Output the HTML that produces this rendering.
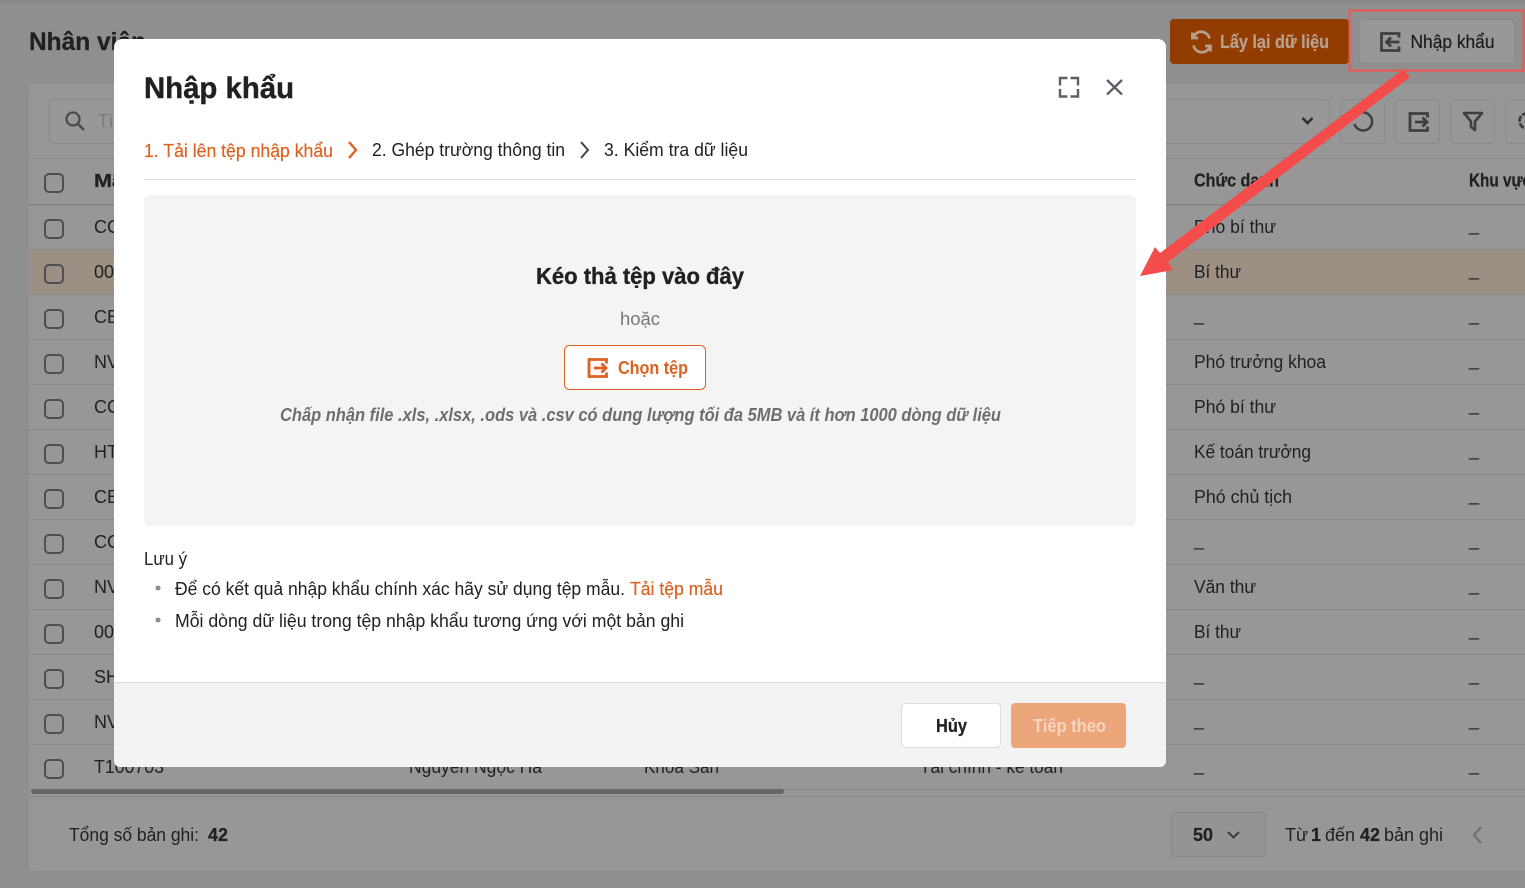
<!DOCTYPE html>
<html lang="vi">
<head>
<meta charset="utf-8">
<title>Nhập khẩu</title>
<style>
html,body{margin:0;padding:0;width:1525px;height:888px;overflow:hidden;background:#8e8e8e}
svg{display:block}
text{font-family:"Liberation Sans","DejaVu Sans",sans-serif;font-size:18px;fill:#212121;white-space:pre}
.b{font-weight:700;stroke:#212121;stroke-width:.25px}
.dk{fill:#1c1c1c}
.o{fill:#dd6120;stroke:#dd6120;stroke-width:.2px}
</style>
</head>
<body>
<svg xmlns="http://www.w3.org/2000/svg" width="1525" height="888" viewBox="0 0 1525 888">
<defs>
<linearGradient id="top" x1="0" y1="0" x2="0" y2="1"><stop offset="0" stop-color="#858585"/><stop offset="1" stop-color="#8f8f8f"/></linearGradient>
<g id="imp" fill="none" stroke-width="2.800"><path d="M19 5.500V1.500H1.500v17H19V14.500"/><path d="M19.500 10H6.500M11 5.500 6.500 10l4.500 4.500"/></g>
<g id="exp" fill="none" stroke-width="2.800"><path d="M19 5.500V1.500H1.500v17H19V14.500"/><path d="M6.500 10h12.500M14 5.500 18.500 10 14 14.500"/></g>
</defs>

<!-- page -->
<rect width="1525" height="888" fill="#8f8f8f"/>
<rect width="1525" height="5" fill="url(#top)"/>
<text x="29" y="50" class="b" style="font-size:25px;stroke:#1a1a1a" textLength="117" lengthAdjust="spacingAndGlyphs">Nhân viên</text>

<!-- top buttons -->
<rect x="1170" y="19" width="179" height="45" rx="4" fill="#923c00"/>
<g fill="none" stroke="#b8a08f" stroke-width="2.800">
<path d="M1209.500 38.500a8.500 8.500 0 0 0-15-3.500l-1.500 2"/><path d="M1193.500 45.500a8.500 8.500 0 0 0 15 3.500l1.500-2"/>
<path d="M1192.500 32.500v5.500h5.500M1210.500 51.500v-5.500h-5.500"/>
</g>
<text x="1220" y="48" textLength="109" lengthAdjust="spacingAndGlyphs" style="fill:#b8a08f;stroke:#b8a08f" class="b">Lấy lại dữ liệu</text>
<rect x="1359.500" y="19.500" width="155" height="44" rx="4" fill="#989898" stroke="#8b8b8b"/>
<use href="#imp" x="1380" y="32" stroke="#3f3f3f"/>
<text x="1410.500" y="48" textLength="84" lengthAdjust="spacingAndGlyphs" class="dk" style="stroke:#1c1c1c;stroke-width:.2px">Nhập khẩu</text>

<!-- panel -->
<rect x="29" y="84" width="1510" height="787" rx="5" fill="#979797"/>
<rect x="49.500" y="99.500" width="1280" height="44" rx="4" fill="#989898" stroke="#8a8a8a"/>
<circle cx="73" cy="119" r="6.500" fill="none" stroke="#4c4c4c" stroke-width="2.300"/><path d="M78 124l6 6" stroke="#4c4c4c" stroke-width="2.600"/>
<text x="98" y="127" textLength="30" lengthAdjust="spacingAndGlyphs" style="fill:#7a7a7a">Tìm</text>
<path d="M1302.500 118l5 5 5-5" fill="none" stroke="#2e2e2e" stroke-width="2.600"/>
<g fill="#979797" stroke="#8a8a8a">
<rect x="1340.500" y="99.500" width="44" height="44" rx="4"/>
<rect x="1395.500" y="99.500" width="44" height="44" rx="4"/>
<rect x="1450.500" y="99.500" width="44" height="44" rx="4"/>
<rect x="1505.500" y="99.500" width="44" height="44" rx="4"/>
</g>
<path d="M1354.500 124A9 9 0 1 0 1363 112.500" fill="none" stroke="#3f3f3f" stroke-width="2.500"/>
<use href="#exp" x="1408.500" y="112" stroke="#3f3f3f"/>
<path d="M1464 113h18l-7 8.500V130l-4-3v-5.500z" fill="none" stroke="#3f3f3f" stroke-width="2.600" stroke-linejoin="round"/>
<circle cx="1527" cy="121" r="7.500" fill="none" stroke="#3f3f3f" stroke-width="2.800" stroke-dasharray="6 1.500"/>

<!-- table -->
<rect x="29" y="158" width="1496" height="46" fill="#979797"/>
<rect x="29" y="158" width="1496" height="1" fill="#8a8a8a"/>
<rect x="29" y="204" width="1496" height="1.500" fill="#838383"/>
<rect x="29" y="250" width="1496" height="44" fill="#9c9085"/>
<g fill="#888">
<rect x="29" y="249" width="1496" height="1"/><rect x="29" y="294" width="1496" height="1"/>
<rect x="29" y="339" width="1496" height="1"/><rect x="29" y="384" width="1496" height="1"/>
<rect x="29" y="429" width="1496" height="1"/><rect x="29" y="474" width="1496" height="1"/>
<rect x="29" y="519" width="1496" height="1"/><rect x="29" y="564" width="1496" height="1"/>
<rect x="29" y="609" width="1496" height="1"/><rect x="29" y="654" width="1496" height="1"/>
<rect x="29" y="699" width="1496" height="1"/><rect x="29" y="744" width="1496" height="1"/>
<rect x="29" y="789" width="1496" height="1"/><rect x="29" y="796" width="1496" height="1"/>
</g>
<g fill="none" stroke="#4e4e54" stroke-width="2">
<rect x="45" y="174" width="18" height="18" rx="4"/>
<rect x="45" y="220" width="18" height="18" rx="4"/><rect x="45" y="265" width="18" height="18" rx="4"/>
<rect x="45" y="310" width="18" height="18" rx="4"/><rect x="45" y="355" width="18" height="18" rx="4"/>
<rect x="45" y="400" width="18" height="18" rx="4"/><rect x="45" y="445" width="18" height="18" rx="4"/>
<rect x="45" y="490" width="18" height="18" rx="4"/><rect x="45" y="535" width="18" height="18" rx="4"/>
<rect x="45" y="580" width="18" height="18" rx="4"/><rect x="45" y="625" width="18" height="18" rx="4"/>
<rect x="45" y="670" width="18" height="18" rx="4"/><rect x="45" y="715" width="18" height="18" rx="4"/>
<rect x="45" y="760" width="18" height="18" rx="4"/>
</g>
<text x="94" y="187" class="b" textLength="30" lengthAdjust="spacingAndGlyphs">Mã</text>
<text x="1194" y="186.500" class="b" textLength="85" lengthAdjust="spacingAndGlyphs">Chức danh</text>
<text x="1469" y="186.500" class="b" textLength="62" lengthAdjust="spacingAndGlyphs">Khu vực</text>

<text x="94" y="233">CC</text><text x="94" y="278">00</text><text x="94" y="323">CB</text><text x="94" y="368">NV</text>
<text x="94" y="413">CC</text><text x="94" y="458">HT</text><text x="94" y="503">CB</text><text x="94" y="548">CC</text>
<text x="94" y="593">NV</text><text x="94" y="638">00</text><text x="94" y="683">SH</text><text x="94" y="728">NV</text>
<text x="94" y="773" textLength="70" lengthAdjust="spacingAndGlyphs">T100703</text>
<text x="409" y="773" textLength="133" lengthAdjust="spacingAndGlyphs">Nguyễn Ngọc Hà</text>
<text x="644" y="773" textLength="75" lengthAdjust="spacingAndGlyphs">Khoa Sản</text>
<text x="920" y="773" textLength="143" lengthAdjust="spacingAndGlyphs">Tài chính - kế toán</text>

<text x="1194" y="233" textLength="82" lengthAdjust="spacingAndGlyphs">Phó bí thư</text>
<text x="1194" y="278" textLength="47" lengthAdjust="spacingAndGlyphs">Bí thư</text>
<text x="1194" y="368" textLength="132" lengthAdjust="spacingAndGlyphs">Phó trưởng khoa</text>
<text x="1194" y="413" textLength="82" lengthAdjust="spacingAndGlyphs">Phó bí thư</text>
<text x="1194" y="458" textLength="117" lengthAdjust="spacingAndGlyphs">Kế toán trưởng</text>
<text x="1194" y="503" textLength="98" lengthAdjust="spacingAndGlyphs">Phó chủ tịch</text>
<text x="1194" y="593" textLength="62" lengthAdjust="spacingAndGlyphs">Văn thư</text>
<text x="1194" y="638" textLength="47" lengthAdjust="spacingAndGlyphs">Bí thư</text>
<text x="1194" y="321">_</text><text x="1194" y="546">_</text><text x="1194" y="681">_</text><text x="1194" y="726">_</text><text x="1194" y="771">_</text>
<text x="1469" y="231">_</text><text x="1469" y="276">_</text><text x="1469" y="321">_</text><text x="1469" y="366">_</text>
<text x="1469" y="411">_</text><text x="1469" y="456">_</text><text x="1469" y="501">_</text><text x="1469" y="546">_</text>
<text x="1469" y="591">_</text><text x="1469" y="636">_</text><text x="1469" y="681">_</text><text x="1469" y="726">_</text><text x="1469" y="771">_</text>

<rect x="31" y="789" width="753" height="5" rx="2.500" fill="#666"/>

<!-- footer -->
<text x="69" y="841" textLength="130" lengthAdjust="spacingAndGlyphs">Tổng số bản ghi:</text>
<text x="208" y="841" class="b" textLength="20" lengthAdjust="spacingAndGlyphs">42</text>
<rect x="1171.500" y="812.500" width="94" height="44" rx="4" fill="#949494" stroke="#868686"/>
<text x="1193" y="841" class="b" textLength="20" lengthAdjust="spacingAndGlyphs">50</text>
<path d="M1228 832l5.500 5.500 5.500-5.500" fill="none" stroke="#3a3a3a" stroke-width="2"/>
<text x="1285" y="841" textLength="23" lengthAdjust="spacingAndGlyphs">Từ</text>
<text x="1311" y="841" class="b">1</text>
<text x="1325" y="841" textLength="30" lengthAdjust="spacingAndGlyphs">đến</text>
<text x="1360" y="841" class="b" textLength="20" lengthAdjust="spacingAndGlyphs">42</text>
<text x="1384" y="841" textLength="59" lengthAdjust="spacingAndGlyphs">bản ghi</text>
<path d="M1481 827l-7 8 7 8" fill="none" stroke="#707070" stroke-width="2.200"/>

<!-- modal -->
<path d="M122 39H1158a8 8 0 0 1 8 8V682H114V47a8 8 0 0 1 8-8z" fill="#fff"/>
<path d="M114 682H1166V761a6 6 0 0 1-6 6H120a6 6 0 0 1-6-6z" fill="#f3f3f3"/>
<rect x="114" y="682" width="1052" height="1" fill="#dedede"/>
<text x="144" y="98" class="b" style="font-size:30px;stroke-width:.4px" textLength="150" lengthAdjust="spacingAndGlyphs">Nhập khẩu</text>
<path d="M1060 85.500V78h7.500M1070.500 78h7.500v7.500M1078 89v7.500h-7.500M1067.500 96.500H1060V89" fill="none" stroke="#5d5f68" stroke-width="2.400"/>
<path d="M1107 80l15 14.500M1122 80l-15 14.500" fill="none" stroke="#5d5f68" stroke-width="2.300"/>

<text x="144" y="157" class="o" textLength="189" lengthAdjust="spacingAndGlyphs">1. Tải lên tệp nhập khẩu</text>
<path d="M349 142l7 8-7 8" fill="none" stroke="#dd6120" stroke-width="2.400"/>
<text x="372" y="156" textLength="193" lengthAdjust="spacingAndGlyphs">2. Ghép trường thông tin</text>
<path d="M581 142l7 8-7 8" fill="none" stroke="#444" stroke-width="2"/>
<text x="604" y="156" textLength="144" lengthAdjust="spacingAndGlyphs">3. Kiểm tra dữ liệu</text>
<rect x="144" y="179" width="992" height="1" fill="#dcdcdc"/>

<rect x="144" y="195" width="992" height="331" rx="6" fill="#f4f4f4"/>
<text x="536" y="284" class="b" style="font-size:23px;stroke-width:.35px" textLength="208" lengthAdjust="spacingAndGlyphs">Kéo thả tệp vào đây</text>
<text x="620" y="325" style="fill:#777" textLength="40" lengthAdjust="spacingAndGlyphs">hoặc</text>
<rect x="564.500" y="345.500" width="141" height="44" rx="5" fill="#fff" stroke="#dd6120"/>
<use href="#exp" x="587.500" y="358" stroke="#dd6120"/>
<text x="618" y="374" textLength="70" lengthAdjust="spacingAndGlyphs" style="font-weight:700;fill:#dd6120">Chọn tệp</text>
<text x="280" y="421" style="font-style:italic;font-weight:700;fill:#6e6e6e" textLength="721" lengthAdjust="spacingAndGlyphs">Chấp nhận file .xls, .xlsx, .ods và .csv có dung lượng tối đa 5MB và ít hơn 1000 dòng dữ liệu</text>

<text x="144" y="565" textLength="43" lengthAdjust="spacingAndGlyphs">Lưu ý</text>
<circle cx="158" cy="588" r="2.500" fill="#8c8c8c"/>
<circle cx="158" cy="620" r="2.500" fill="#8c8c8c"/>
<text x="175" y="595" textLength="450" lengthAdjust="spacingAndGlyphs">Để có kết quả nhập khẩu chính xác hãy sử dụng tệp mẫu.</text>
<text x="630" y="595" class="o" textLength="93" lengthAdjust="spacingAndGlyphs">Tải tệp mẫu</text>
<text x="175" y="627" textLength="509" lengthAdjust="spacingAndGlyphs">Mỗi dòng dữ liệu trong tệp nhập khẩu tương ứng với một bản ghi</text>

<rect x="901.500" y="703.500" width="99" height="44" rx="4" fill="#fff" stroke="#dcdcdc"/>
<text x="936" y="732" class="b" textLength="31" lengthAdjust="spacingAndGlyphs">Hủy</text>
<rect x="1011" y="703" width="115" height="45" rx="4" fill="#eda67b"/>
<text x="1033" y="732" style="font-weight:700;fill:#f8d5bf" textLength="73" lengthAdjust="spacingAndGlyphs">Tiếp theo</text>

<!-- annotation -->
<rect x="1349.500" y="10.500" width="174" height="60" fill="none" stroke="#ef5350" stroke-width="2"/>
<path d="M1403 69.500l7 7.500L1168 262l5 8-33 6 15-29 5 6z" fill="#f44b4b"/>
</svg>
</body>
</html>
